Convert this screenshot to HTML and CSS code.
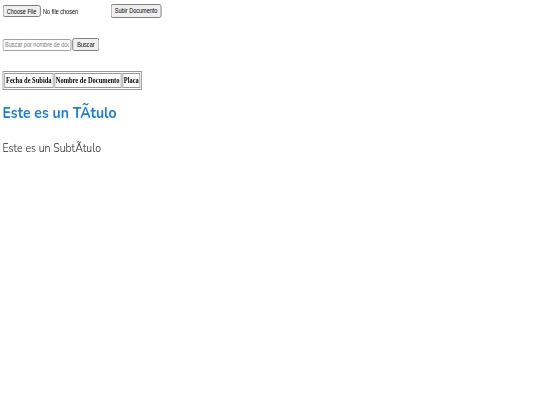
FILE: index.html
```html
<!DOCTYPE html>
<html>
<head>
<meta charset="utf-8">
<link rel="stylesheet" href="styles.css">
</head>
<body>
<div class="page">
  <form class="upload">
    <input type="file" class="file">
    <button type="button" class="btn">Subir Documento</button>
  </form>
  <form class="search">
    <input type="text" class="query" placeholder="Buscar por nombre de documento">
    <button type="button" class="btn">Buscar</button>
  </form>
  <table class="docs">
    <thead>
      <tr><th>Fecha de Subida</th><th>Nombre de Documento</th><th>Placa</th></tr>
    </thead>
  </table>
  <h1 class="title">Este es un TÃtulo</h1>
  <p class="subtitle">Este es un SubtÃtulo</p>
</div>
</body>
</html>
```
FILE: styles.css
```css
body { margin: 0; background: #fff; }
.page { padding: 4px 3px; transform: scale(0.85, 1); transform-origin: 0 0; }
.upload { display: flex; align-items: center; margin: 0; height: 13px; }
.file { font: 6.5px "Liberation Sans", Arial, sans-serif; width: 127px; margin: 0; }
.file::file-selector-button { font: 6.5px "Liberation Sans", Arial, sans-serif; padding: 1px 3px; margin-right: 3px; height: 12px; }
.btn { font: 6.5px "Liberation Sans", Arial, sans-serif; margin: 0; padding: 1px 4px; height: 13px; }
.upload .btn { padding: 1px 3px; height: 14px; }
.search { display: flex; align-items: center; margin: 21px 0 0; height: 13px; }
.query { font: 6.5px "Liberation Sans", Arial, sans-serif; width: 75px; height: 8px; padding: 1px 2px; margin: 0 1px 0 0; border: 1px solid #999; border-radius: 2px; }
.query::placeholder { color: #777; }
.docs { margin-top: 20px; border: 1px solid #999; border-spacing: 1px; font: bold 7.6px "Liberation Serif", "Times New Roman", serif; }
.docs th { border: 1px solid #999; padding: 1px 1px; line-height: 11px; }
.title { font: bold 16.5px "Nunito", "Open Sans", sans-serif; color: #1a7fe0; margin: 11px 0 0; }
.subtitle { font: 300 12.5px "Nunito", "Open Sans", sans-serif; color: #222; margin: 15px 0 0; }
```
